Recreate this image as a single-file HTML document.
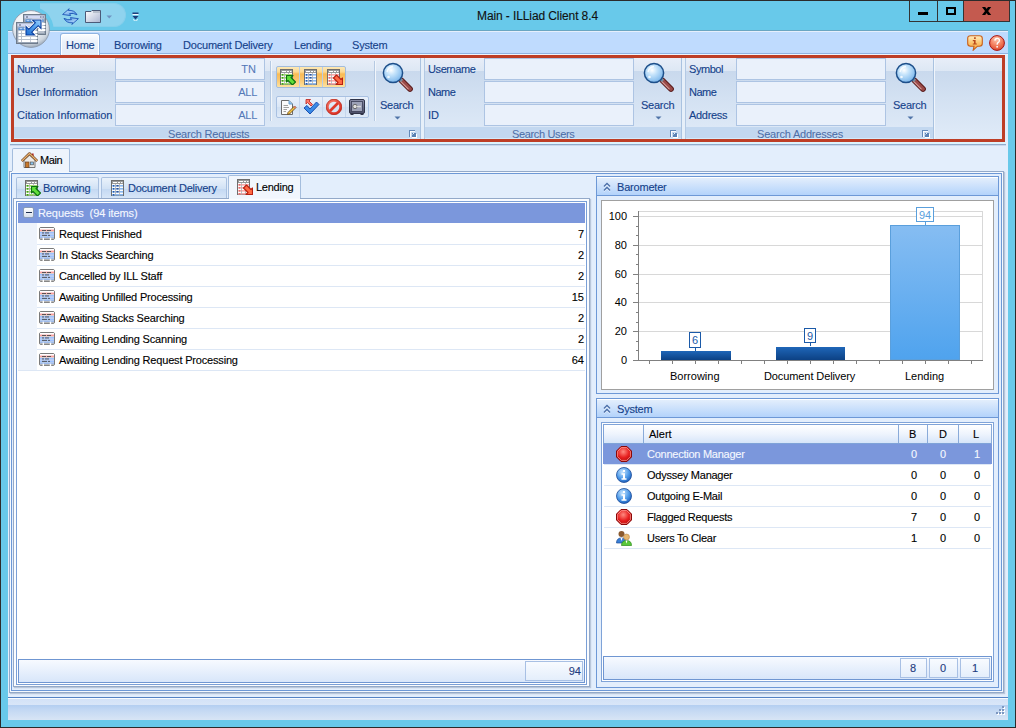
<!DOCTYPE html>
<html><head><meta charset="utf-8">
<style>
*{box-sizing:border-box;margin:0;padding:0}
html,body{width:1016px;height:728px;overflow:hidden}
body{position:relative;background:#2b2b2b;font-family:"Liberation Sans",sans-serif;font-size:11px;color:#000}
.a{position:absolute}
.t{position:absolute;white-space:nowrap;line-height:1;-webkit-text-stroke:0.12px currentColor}
</style></head><body>
<div class="a" style="left:1px;top:1px;width:1014px;height:726px;background:#68c9ea"></div>
<div class="a" style="left:8px;top:31px;width:1000px;height:689px;background:#e3eefc"></div>
<div class="a" style="left:8px;top:31px;width:1000px;height:24px;background:#bfdbfe"></div>
<div class="a" style="left:8px;top:30px;width:1000px;height:1px;background:#6aa6c2"></div>
<div class="a" style="left:8px;top:31px;width:1000px;height:1px;background:#e6effc"></div>
<div class="a" style="left:8px;top:53px;width:1000px;height:1px;background:#8fb2e2"></div>
<div class="a" style="left:8px;top:54px;width:1000px;height:1px;background:#eef4fc"></div>
<div class="t" style="left:477px;top:10px;font-size:12px;color:#111;letter-spacing:-0.1px;">Main - ILLiad Client 8.4</div>
<div class="a" style="left:909px;top:1px;width:101px;height:21px;border:1px solid #333;border-top:0;background:#68c9ea"></div>
<div class="a" style="left:937px;top:1px;width:1px;height:21px;background:#333"></div>
<div class="a" style="left:963px;top:1px;width:46px;height:20px;background:#c45a4f"></div>
<div class="a" style="left:963px;top:1px;width:1px;height:21px;background:#333"></div>
<div class="a" style="left:918px;top:12px;width:10px;height:3px;background:#000"></div>
<div class="a" style="left:946px;top:7px;width:10px;height:8px;border:2px solid #000"></div>
<svg class="a" style="left:981px;top:7px;" width="11" height="9" viewBox="0 0 11 9"><path d="M1 0 L4.2 0 L10.2 8 L7 8 Z M7 0 L10.2 0 L4.2 8 L1 8 Z" fill="#000"/></svg>
<div class="a" style="left:40px;top:3px;width:86px;height:24px;border-radius:0 12px 12px 0;background:#8fd3ee;border:1px solid #86cfeb;border-left:0"></div>
<svg class="a" style="left:8px;top:1px;" width="60" height="29" viewBox="0 0 60 29"><circle cx="23" cy="28" r="22.5" fill="#68c9ea"/></svg>
<div class="a" style="left:60px;top:33px;width:40px;height:22px;border:1px solid #8fb3e0;border-bottom:0;border-radius:3px 3px 0 0;background:linear-gradient(#fbfdff,#eaf1fa 40%,#e4ecf7);box-shadow:inset 1px 1px 0 #fff,inset -1px 0 0 #fff"></div>
<div class="t" style="left:66px;top:40px;font-size:11px;color:#15428b;letter-spacing:-0.2px;">Home</div>
<div class="t" style="left:114px;top:40px;font-size:11px;color:#15428b;letter-spacing:-0.2px;">Borrowing</div>
<div class="t" style="left:183px;top:40px;font-size:11px;color:#15428b;letter-spacing:-0.2px;">Document Delivery</div>
<div class="t" style="left:294px;top:40px;font-size:11px;color:#15428b;letter-spacing:-0.2px;">Lending</div>
<div class="t" style="left:352px;top:40px;font-size:11px;color:#15428b;letter-spacing:-0.2px;">System</div>
<div class="a" style="left:11px;top:55px;width:994px;height:87px;border:3px solid #be3e26;background:#dde7f4"></div>
<div class="a" style="left:14px;top:58px;width:988px;height:81px;background:linear-gradient(#e8eef8 0,#dde7f4 13px,#c9d9ed 13px,#d3e1f2 40px,#e0ebf8 81px)"></div>
<div class="a" style="left:14px;top:127px;width:406px;height:11px;background:#c3d8f0"></div>
<div class="a" style="left:14px;top:138px;width:406px;height:1px;background:#d4ebfb"></div>
<div class="a" style="left:425px;top:127px;width:256px;height:11px;background:#c3d8f0"></div>
<div class="a" style="left:425px;top:138px;width:256px;height:1px;background:#d4ebfb"></div>
<div class="a" style="left:686px;top:127px;width:247px;height:11px;background:#c3d8f0"></div>
<div class="a" style="left:686px;top:138px;width:247px;height:1px;background:#d4ebfb"></div>
<div class="a" style="left:420px;top:58px;width:1px;height:81px;background:#a9c2e0"></div>
<div class="a" style="left:421px;top:58px;width:3px;height:81px;background:#e6eff9"></div>
<div class="a" style="left:424px;top:58px;width:1px;height:81px;background:#b3c9e4"></div>
<div class="a" style="left:681px;top:58px;width:1px;height:81px;background:#a9c2e0"></div>
<div class="a" style="left:682px;top:58px;width:3px;height:81px;background:#e6eff9"></div>
<div class="a" style="left:685px;top:58px;width:1px;height:81px;background:#b3c9e4"></div>
<div class="a" style="left:933px;top:58px;width:1px;height:81px;background:#a9c2e0"></div>
<div class="a" style="left:934px;top:58px;width:1px;height:81px;background:#f0f5fb"></div>
<div class="t" style="left:17px;top:64px;font-size:11px;color:#15428b;letter-spacing:-0.4px;">Number</div>
<div class="a" style="left:115px;top:58px;width:150px;height:22px;background:#eaf1fb;border:1px solid #adc4e3"></div>
<div class="t" style="left:17px;top:87px;font-size:11px;color:#15428b;letter-spacing:-0.05px;">User Information</div>
<div class="a" style="left:115px;top:81px;width:150px;height:22px;background:#eaf1fb;border:1px solid #adc4e3"></div>
<div class="t" style="left:17px;top:110px;font-size:11px;color:#15428b;letter-spacing:0px;">Citation Information</div>
<div class="a" style="left:115px;top:104px;width:150px;height:22px;background:#eaf1fb;border:1px solid #adc4e3"></div>
<div class="t" style="left:156px;top:64px;width:100px;text-align:right;font-size:11px;color:#5378b8;letter-spacing:0px;-webkit-text-stroke:0.05px">TN</div>
<div class="t" style="left:157px;top:87px;width:100px;text-align:right;font-size:11px;color:#5378b8;letter-spacing:-0.3px;-webkit-text-stroke:0.05px">ALL</div>
<div class="t" style="left:157px;top:110px;width:100px;text-align:right;font-size:11px;color:#5378b8;letter-spacing:-0.3px;-webkit-text-stroke:0.05px">ALL</div>
<div class="a" style="left:270px;top:61px;width:1px;height:60px;background:#b5c9e2"></div>
<div class="a" style="left:271px;top:61px;width:1px;height:60px;background:#f2f6fb"></div>
<div class="a" style="left:374px;top:61px;width:1px;height:60px;background:#b5c9e2"></div>
<div class="a" style="left:375px;top:61px;width:1px;height:60px;background:#f2f6fb"></div>
<div class="t" style="left:168px;top:129px;font-size:11px;color:#4e6fa8;letter-spacing:-0.2px;-webkit-text-stroke:0.05px">Search Requests</div>
<div class="t" style="left:512px;top:129px;font-size:11px;color:#4e6fa8;letter-spacing:-0.35px;-webkit-text-stroke:0.05px">Search Users</div>
<div class="t" style="left:757px;top:129px;font-size:11px;color:#4e6fa8;letter-spacing:-0.2px;-webkit-text-stroke:0.05px">Search Addresses</div>
<div class="t" style="left:428px;top:64px;font-size:11px;color:#15428b;letter-spacing:-0.4px;">Username</div>
<div class="a" style="left:484px;top:58px;width:150px;height:22px;background:#eaf1fb;border:1px solid #adc4e3"></div>
<div class="t" style="left:428px;top:87px;font-size:11px;color:#15428b;letter-spacing:-0.5px;">Name</div>
<div class="a" style="left:484px;top:81px;width:150px;height:22px;background:#eaf1fb;border:1px solid #adc4e3"></div>
<div class="t" style="left:428px;top:110px;font-size:11px;color:#15428b;letter-spacing:0px;">ID</div>
<div class="a" style="left:484px;top:104px;width:150px;height:22px;background:#eaf1fb;border:1px solid #adc4e3"></div>
<div class="t" style="left:689px;top:64px;font-size:11px;color:#15428b;letter-spacing:-0.45px;">Symbol</div>
<div class="a" style="left:736px;top:58px;width:150px;height:22px;background:#eaf1fb;border:1px solid #adc4e3"></div>
<div class="t" style="left:689px;top:87px;font-size:11px;color:#15428b;letter-spacing:-0.5px;">Name</div>
<div class="a" style="left:736px;top:81px;width:150px;height:22px;background:#eaf1fb;border:1px solid #adc4e3"></div>
<div class="t" style="left:689px;top:110px;font-size:11px;color:#15428b;letter-spacing:-0.3px;">Address</div>
<div class="a" style="left:736px;top:104px;width:150px;height:22px;background:#eaf1fb;border:1px solid #adc4e3"></div>
<div class="t" style="left:380px;top:100px;font-size:11px;color:#15428b;letter-spacing:-0.25px;">Search</div>
<div class="t" style="left:641px;top:100px;font-size:11px;color:#15428b;letter-spacing:-0.25px;">Search</div>
<div class="t" style="left:893px;top:100px;font-size:11px;color:#15428b;letter-spacing:-0.25px;">Search</div>
<div class="a" style="left:10px;top:142px;width:996px;height:2px;background:#dcf3fd"></div>
<div class="a" style="left:10px;top:144px;width:996px;height:1px;background:#93abca"></div>
<div class="a" style="left:10px;top:145px;width:996px;height:1px;background:#c9d9ee"></div>
<div class="a" style="left:12px;top:148px;width:58px;height:24px;border:1px solid #a4bddd;border-bottom:0;border-radius:2px 2px 0 0;background:#eef4fc"></div>
<div class="t" style="left:40px;top:155px;font-size:11px;color:#000;letter-spacing:-0.4px;">Main</div>
<div class="a" style="left:9px;top:171px;width:995px;height:522px;border:1px solid #93a9c9;background:#f5f9fe;box-shadow:1px 1px 1px rgba(90,110,140,.3)"></div>
<div class="a" style="left:12px;top:171px;width:57px;height:1px;background:#eef4fc"></div>
<div class="a" style="left:11px;top:173px;width:991px;height:518px;border:1px solid #6d98d6;background:#e3eefc"></div>
<div class="a" style="left:16px;top:177px;width:83px;height:22px;border:1px solid #a9c0df;border-bottom:0;border-radius:2px 2px 0 0;background:linear-gradient(#eaf2fb,#d2e2f5 50%,#c3d8f2 51%,#d9e7f8)"></div>
<div class="a" style="left:101px;top:177px;width:126px;height:22px;border:1px solid #a9c0df;border-bottom:0;border-radius:2px 2px 0 0;background:linear-gradient(#eaf2fb,#d2e2f5 50%,#c3d8f2 51%,#d9e7f8)"></div>
<div class="a" style="left:228px;top:175px;width:73px;height:25px;border:1px solid #a4bddd;border-bottom:0;border-radius:2px 2px 0 0;background:#f1f6fd"></div>
<div class="t" style="left:43px;top:183px;font-size:11px;color:#15428b;letter-spacing:-0.25px;">Borrowing</div>
<div class="t" style="left:128px;top:183px;font-size:11px;color:#15428b;letter-spacing:-0.25px;">Document Delivery</div>
<div class="t" style="left:256px;top:182px;font-size:11px;color:#000;letter-spacing:-0.25px;">Lending</div>
<div class="a" style="left:13px;top:198px;width:577px;height:489px;border:1px solid #93a9c9;background:#fafcff;box-shadow:1px 1px 1px rgba(90,110,140,.3)"></div>
<div class="a" style="left:229px;top:198px;width:71px;height:1px;background:#f4f8fe"></div>
<div class="a" style="left:16px;top:201px;width:571px;height:484px;border:1px solid #7a9fd6;background:#fff"></div>
<div class="a" style="left:18px;top:203px;width:567px;height:20px;background:#7b97dc"></div>
<div class="a" style="left:23px;top:207px;width:11px;height:11px;border:1px solid #8a9cb8;border-radius:2px;background:linear-gradient(#ffffff,#d8e0ec)"></div>
<div class="a" style="left:26px;top:212px;width:6px;height:1px;background:#1d2d50"></div>
<div class="t" style="left:38px;top:208px;font-size:11px;color:#f4f7ff;letter-spacing:-0.1px;">Requests&nbsp; (94 items)</div>
<div class="a" style="left:18px;top:223px;width:19px;height:147px;background:#eef3fb"></div>
<div class="a" style="left:37px;top:244px;width:548px;height:1px;background:#dde7f5"></div>
<div class="t" style="left:59px;top:229px;font-size:11px;color:#000;letter-spacing:-0.18px;">Request Finished</div>
<div class="t" style="left:484px;top:229px;width:100px;text-align:right;font-size:11px;color:#000;letter-spacing:0px;">7</div>
<div class="a" style="left:37px;top:265px;width:548px;height:1px;background:#dde7f5"></div>
<div class="t" style="left:59px;top:250px;font-size:11px;color:#000;letter-spacing:-0.18px;">In Stacks Searching</div>
<div class="t" style="left:484px;top:250px;width:100px;text-align:right;font-size:11px;color:#000;letter-spacing:0px;">2</div>
<div class="a" style="left:37px;top:286px;width:548px;height:1px;background:#dde7f5"></div>
<div class="t" style="left:59px;top:271px;font-size:11px;color:#000;letter-spacing:-0.18px;">Cancelled by ILL Staff</div>
<div class="t" style="left:484px;top:271px;width:100px;text-align:right;font-size:11px;color:#000;letter-spacing:0px;">2</div>
<div class="a" style="left:37px;top:307px;width:548px;height:1px;background:#dde7f5"></div>
<div class="t" style="left:59px;top:292px;font-size:11px;color:#000;letter-spacing:-0.18px;">Awaiting Unfilled Processing</div>
<div class="t" style="left:484px;top:292px;width:100px;text-align:right;font-size:11px;color:#000;letter-spacing:0px;">15</div>
<div class="a" style="left:37px;top:328px;width:548px;height:1px;background:#dde7f5"></div>
<div class="t" style="left:59px;top:313px;font-size:11px;color:#000;letter-spacing:-0.18px;">Awaiting Stacks Searching</div>
<div class="t" style="left:484px;top:313px;width:100px;text-align:right;font-size:11px;color:#000;letter-spacing:0px;">2</div>
<div class="a" style="left:37px;top:349px;width:548px;height:1px;background:#dde7f5"></div>
<div class="t" style="left:59px;top:334px;font-size:11px;color:#000;letter-spacing:-0.18px;">Awaiting Lending Scanning</div>
<div class="t" style="left:484px;top:334px;width:100px;text-align:right;font-size:11px;color:#000;letter-spacing:0px;">2</div>
<div class="a" style="left:37px;top:370px;width:548px;height:1px;background:#dde7f5"></div>
<div class="t" style="left:59px;top:355px;font-size:11px;color:#000;letter-spacing:-0.18px;">Awaiting Lending Request Processing</div>
<div class="t" style="left:484px;top:355px;width:100px;text-align:right;font-size:11px;color:#000;letter-spacing:0px;">64</div>
<div class="a" style="left:18px;top:370px;width:19px;height:1px;background:#dde7f5"></div>
<div class="a" style="left:18px;top:659px;width:567px;height:24px;border:1px solid #6f96d2;background:linear-gradient(#f7faff,#d8e6fa)"></div>
<div class="a" style="left:525px;top:661px;width:58px;height:20px;border:1px solid #a8c0e4;background:linear-gradient(#f8fbff,#e4eefb)"></div>
<div class="t" style="left:481px;top:666px;width:100px;text-align:right;font-size:11px;color:#1f3c80;letter-spacing:0px;">94</div>
<div class="a" style="left:596px;top:176px;width:403px;height:218px;border:1px solid #6d98d6;background:#e3eefc"></div>
<div class="a" style="left:597px;top:177px;width:401px;height:19px;border-bottom:1px solid #6d98d6;background:linear-gradient(#fff 0,#fff 1px,#e3eefc 1px,#b3d3fb 100%)"></div>
<div class="t" style="left:617px;top:182px;font-size:11px;color:#15428b;letter-spacing:-0.2px;">Barometer</div>
<div class="a" style="left:601px;top:200px;width:393px;height:190px;border:1px solid #a0a0a0;background:#fff"></div>
<svg class="a" style="left:0;top:0" width="1016" height="728"><rect x="638.5" y="211.5" width="344" height="149" fill="none" stroke="#d8d8d8"/><line x1="639" y1="331.5" x2="982" y2="331.5" stroke="#d8d8d8"/><line x1="639" y1="302.5" x2="982" y2="302.5" stroke="#d8d8d8"/><line x1="639" y1="274.5" x2="982" y2="274.5" stroke="#d8d8d8"/><line x1="639" y1="245.5" x2="982" y2="245.5" stroke="#d8d8d8"/><line x1="639" y1="216.5" x2="982" y2="216.5" stroke="#d8d8d8"/><line x1="633" y1="360.5" x2="639" y2="360.5" stroke="#808080"/><line x1="636" y1="350.5" x2="639" y2="350.5" stroke="#808080"/><line x1="636" y1="341.5" x2="639" y2="341.5" stroke="#808080"/><line x1="633" y1="331.5" x2="639" y2="331.5" stroke="#808080"/><line x1="636" y1="322.5" x2="639" y2="322.5" stroke="#808080"/><line x1="636" y1="312.5" x2="639" y2="312.5" stroke="#808080"/><line x1="633" y1="302.5" x2="639" y2="302.5" stroke="#808080"/><line x1="636" y1="293.5" x2="639" y2="293.5" stroke="#808080"/><line x1="636" y1="283.5" x2="639" y2="283.5" stroke="#808080"/><line x1="633" y1="274.5" x2="639" y2="274.5" stroke="#808080"/><line x1="636" y1="264.5" x2="639" y2="264.5" stroke="#808080"/><line x1="636" y1="254.5" x2="639" y2="254.5" stroke="#808080"/><line x1="633" y1="245.5" x2="639" y2="245.5" stroke="#808080"/><line x1="636" y1="235.5" x2="639" y2="235.5" stroke="#808080"/><line x1="636" y1="226.5" x2="639" y2="226.5" stroke="#808080"/><line x1="633" y1="216.5" x2="639" y2="216.5" stroke="#808080"/><line x1="638.5" y1="211" x2="638.5" y2="361" stroke="#808080"/><line x1="638" y1="360.5" x2="983" y2="360.5" stroke="#808080"/><line x1="649.5" y1="361" x2="649.5" y2="364" stroke="#808080"/><line x1="672.5" y1="361" x2="672.5" y2="364" stroke="#808080"/><line x1="695.5" y1="361" x2="695.5" y2="364" stroke="#808080"/><line x1="718.5" y1="361" x2="718.5" y2="364" stroke="#808080"/><line x1="741.5" y1="361" x2="741.5" y2="364" stroke="#808080"/><line x1="764.5" y1="361" x2="764.5" y2="364" stroke="#808080"/><line x1="787.5" y1="361" x2="787.5" y2="364" stroke="#808080"/><line x1="810.5" y1="361" x2="810.5" y2="364" stroke="#808080"/><line x1="833.5" y1="361" x2="833.5" y2="364" stroke="#808080"/><line x1="856.5" y1="361" x2="856.5" y2="364" stroke="#808080"/><line x1="879.5" y1="361" x2="879.5" y2="364" stroke="#808080"/><line x1="902.5" y1="361" x2="902.5" y2="364" stroke="#808080"/><line x1="925.5" y1="361" x2="925.5" y2="364" stroke="#808080"/><line x1="948.5" y1="361" x2="948.5" y2="364" stroke="#808080"/><line x1="971.5" y1="361" x2="971.5" y2="364" stroke="#808080"/><defs><linearGradient id="gd" x1="0" y1="0" x2="0" y2="1"><stop offset="0" stop-color="#1f66b8"/><stop offset="1" stop-color="#0c4184"/></linearGradient><linearGradient id="gl" x1="0" y1="0" x2="0" y2="1"><stop offset="0" stop-color="#86bdf2"/><stop offset="1" stop-color="#4fa3ee"/></linearGradient></defs><rect x="661" y="351" width="70" height="9" fill="url(#gd)"/><rect x="776" y="347" width="69" height="13" fill="url(#gd)"/><rect x="890.5" y="225.5" width="69" height="134" fill="url(#gl)" stroke="#5a9fdc"/><rect x="689.5" y="332.5" width="11" height="15" fill="#fff" stroke="#1b5aa8"/><line x1="695.5" y1="348" x2="695.5" y2="351" stroke="#1b5aa8"/><rect x="804.5" y="328.5" width="11" height="14" fill="#fff" stroke="#1b5aa8"/><line x1="810.5" y1="343" x2="810.5" y2="346" stroke="#1b5aa8"/><rect x="916.5" y="207.5" width="17" height="14" fill="#fff" stroke="#5a9fdc"/><line x1="925.5" y1="222" x2="925.5" y2="225" stroke="#5a9fdc"/></svg>
<div class="t" style="left:527px;top:211px;width:100px;text-align:right;font-size:11px;color:#000;letter-spacing:0px;-webkit-text-stroke:0">100</div>
<div class="t" style="left:527px;top:240px;width:100px;text-align:right;font-size:11px;color:#000;letter-spacing:0px;-webkit-text-stroke:0">80</div>
<div class="t" style="left:527px;top:269px;width:100px;text-align:right;font-size:11px;color:#000;letter-spacing:0px;-webkit-text-stroke:0">60</div>
<div class="t" style="left:527px;top:297px;width:100px;text-align:right;font-size:11px;color:#000;letter-spacing:0px;-webkit-text-stroke:0">40</div>
<div class="t" style="left:527px;top:326px;width:100px;text-align:right;font-size:11px;color:#000;letter-spacing:0px;-webkit-text-stroke:0">20</div>
<div class="t" style="left:527px;top:355px;width:100px;text-align:right;font-size:11px;color:#000;letter-spacing:0px;-webkit-text-stroke:0">0</div>
<div class="t" style="left:595px;top:335px;width:200px;text-align:center;font-size:11px;color:#1b5aa8;letter-spacing:0px;-webkit-text-stroke:0">6</div>
<div class="t" style="left:710px;top:331px;width:200px;text-align:center;font-size:11px;color:#1b5aa8;letter-spacing:0px;-webkit-text-stroke:0">9</div>
<div class="t" style="left:825px;top:210px;width:200px;text-align:center;font-size:11px;color:#5a9fdc;letter-spacing:0px;-webkit-text-stroke:0">94</div>
<div class="t" style="left:670px;top:371px;font-size:11px;color:#000;letter-spacing:0px;-webkit-text-stroke:0">Borrowing</div>
<div class="t" style="left:764px;top:371px;font-size:11px;color:#000;letter-spacing:-0.1px;-webkit-text-stroke:0">Document Delivery</div>
<div class="t" style="left:905px;top:371px;font-size:11px;color:#000;letter-spacing:0px;-webkit-text-stroke:0">Lending</div>
<div class="a" style="left:596px;top:398px;width:403px;height:290px;border:1px solid #6d98d6;background:#e3eefc"></div>
<div class="a" style="left:597px;top:399px;width:401px;height:19px;border-bottom:1px solid #6d98d6;background:linear-gradient(#fff 0,#fff 1px,#e3eefc 1px,#b3d3fb 100%)"></div>
<div class="t" style="left:617px;top:404px;font-size:11px;color:#15428b;letter-spacing:-0.2px;">System</div>
<div class="a" style="left:601px;top:422px;width:393px;height:260px;border:1px solid #7fa3d8;background:#fff"></div>
<div class="a" style="left:603px;top:424px;width:389px;height:20px;border:1px solid #7fa3d8;border-right-color:#8aabd9;background:linear-gradient(#ffffff,#eef4fd 50%,#d6e5f9)"></div>
<div class="a" style="left:643px;top:425px;width:1px;height:18px;background:#8aabd9"></div>
<div class="a" style="left:898px;top:425px;width:1px;height:18px;background:#8aabd9"></div>
<div class="a" style="left:927px;top:425px;width:1px;height:18px;background:#8aabd9"></div>
<div class="a" style="left:958px;top:425px;width:1px;height:18px;background:#8aabd9"></div>
<div class="t" style="left:649px;top:429px;font-size:11px;color:#000;letter-spacing:0px;">Alert</div>
<div class="t" style="left:909px;top:429px;font-size:11px;color:#000;letter-spacing:0px;">B</div>
<div class="t" style="left:939px;top:429px;font-size:11px;color:#000;letter-spacing:0px;">D</div>
<div class="t" style="left:973px;top:429px;font-size:11px;color:#000;letter-spacing:0px;">L</div>
<div class="a" style="left:603px;top:444px;width:389px;height:20px;background:#7b97dc"></div>
<div class="a" style="left:604px;top:464px;width:387px;height:1px;background:#dde7f5"></div>
<div class="t" style="left:647px;top:449px;font-size:11px;color:#f4f7ff;letter-spacing:-0.25px;">Connection Manager</div>
<div class="t" style="left:911px;top:449px;font-size:11px;color:#f4f7ff;letter-spacing:0px;">0</div>
<div class="t" style="left:940px;top:449px;font-size:11px;color:#f4f7ff;letter-spacing:0px;">0</div>
<div class="t" style="left:974px;top:449px;font-size:11px;color:#f4f7ff;letter-spacing:0px;">1</div>
<div class="a" style="left:604px;top:485px;width:387px;height:1px;background:#dde7f5"></div>
<div class="t" style="left:647px;top:470px;font-size:11px;color:#000;letter-spacing:-0.25px;">Odyssey Manager</div>
<div class="t" style="left:911px;top:470px;font-size:11px;color:#000;letter-spacing:0px;">0</div>
<div class="t" style="left:940px;top:470px;font-size:11px;color:#000;letter-spacing:0px;">0</div>
<div class="t" style="left:974px;top:470px;font-size:11px;color:#000;letter-spacing:0px;">0</div>
<div class="a" style="left:604px;top:506px;width:387px;height:1px;background:#dde7f5"></div>
<div class="t" style="left:647px;top:491px;font-size:11px;color:#000;letter-spacing:-0.25px;">Outgoing E-Mail</div>
<div class="t" style="left:911px;top:491px;font-size:11px;color:#000;letter-spacing:0px;">0</div>
<div class="t" style="left:940px;top:491px;font-size:11px;color:#000;letter-spacing:0px;">0</div>
<div class="t" style="left:974px;top:491px;font-size:11px;color:#000;letter-spacing:0px;">0</div>
<div class="a" style="left:604px;top:527px;width:387px;height:1px;background:#dde7f5"></div>
<div class="t" style="left:647px;top:512px;font-size:11px;color:#000;letter-spacing:-0.25px;">Flagged Requests</div>
<div class="t" style="left:911px;top:512px;font-size:11px;color:#000;letter-spacing:0px;">7</div>
<div class="t" style="left:940px;top:512px;font-size:11px;color:#000;letter-spacing:0px;">0</div>
<div class="t" style="left:974px;top:512px;font-size:11px;color:#000;letter-spacing:0px;">0</div>
<div class="a" style="left:604px;top:548px;width:387px;height:1px;background:#dde7f5"></div>
<div class="t" style="left:647px;top:533px;font-size:11px;color:#000;letter-spacing:-0.25px;">Users To Clear</div>
<div class="t" style="left:911px;top:533px;font-size:11px;color:#000;letter-spacing:0px;">1</div>
<div class="t" style="left:940px;top:533px;font-size:11px;color:#000;letter-spacing:0px;">0</div>
<div class="t" style="left:974px;top:533px;font-size:11px;color:#000;letter-spacing:0px;">0</div>
<div class="a" style="left:603px;top:656px;width:389px;height:24px;border:1px solid #6f96d2;background:linear-gradient(#f7faff,#d8e6fa)"></div>
<div class="a" style="left:900px;top:658px;width:27px;height:20px;border:1px solid #a8c0e4;background:linear-gradient(#f8fbff,#e4eefb)"></div>
<div class="t" style="left:813px;top:663px;width:200px;text-align:center;font-size:11px;color:#1f3c80;letter-spacing:0px;">8</div>
<div class="a" style="left:929px;top:658px;width:29px;height:20px;border:1px solid #a8c0e4;background:linear-gradient(#f8fbff,#e4eefb)"></div>
<div class="t" style="left:843px;top:663px;width:200px;text-align:center;font-size:11px;color:#1f3c80;letter-spacing:0px;">0</div>
<div class="a" style="left:960px;top:658px;width:30px;height:20px;border:1px solid #a8c0e4;background:linear-gradient(#f8fbff,#e4eefb)"></div>
<div class="t" style="left:875px;top:663px;width:200px;text-align:center;font-size:11px;color:#1f3c80;letter-spacing:0px;">1</div>
<div class="a" style="left:8px;top:697px;width:1000px;height:23px;border-top:1px solid #5583c4;background:linear-gradient(#fafcff 0,#fafcff 1px,#d3e2f7 1px,#d9e6f8 7px,#b3cef1 7px,#c3d8f3 12px,#d8e5f5 22px)"></div>
<svg class="a" style="left:10px;top:8px;" width="44" height="44" viewBox="0 0 44 44"><defs>
<radialGradient id="abg" cx="0.45" cy="0.3" r="0.7"><stop offset="0" stop-color="#ffffff"/><stop offset="0.55" stop-color="#eef1f5"/><stop offset="0.85" stop-color="#cdd5de"/><stop offset="1" stop-color="#9eabb9"/></radialGradient>
<linearGradient id="arr" x1="0" y1="1" x2="1" y2="0"><stop offset="0" stop-color="#1b6ad0"/><stop offset="0.6" stop-color="#5aa6f0"/><stop offset="1" stop-color="#9fd2ff"/></linearGradient>
</defs>
<circle cx="21" cy="21" r="18.4" fill="url(#abg)" stroke="#8d9aab" stroke-width="0.9"/>
<rect x="13.5" y="6.5" width="22" height="20" fill="#9aa6b6" stroke="#6f7c8c"/><rect x="14.5" y="7.5" width="20" height="3" fill="#d4daf4"/><rect x="16" y="8.5" width="2" height="1" fill="#505a70"/><rect x="30" y="8.5" width="1.5" height="1" fill="#505a70"/><rect x="32.5" y="8.5" width="1.5" height="1" fill="#505a70"/><rect x="15" y="11" width="19" height="14" fill="#b8c0cc"/><rect x="15.5" y="11.5" width="18" height="2.5" fill="#3b7fd4"/><rect x="16.5" y="12.3" width="3" height="0.9" fill="#e8f2ff"/><rect x="20.5" y="12.3" width="2" height="0.9" fill="#e8f2ff"/><rect x="15.5" y="15" width="2.5" height="2" fill="#fff"/><rect x="19" y="15" width="8.5" height="2" fill="#fff"/><rect x="28.3" y="15" width="7.1" height="2" fill="#fff"/><rect x="15.5" y="18" width="2.5" height="2" fill="#fff"/><rect x="19" y="18" width="8.5" height="2" fill="#fff"/><rect x="28.3" y="18" width="7.1" height="2" fill="#fff"/><rect x="15.5" y="21" width="2.5" height="2" fill="#fff"/><rect x="19" y="21" width="8.5" height="2" fill="#fff"/><rect x="28.3" y="21" width="7.1" height="2" fill="#fff"/><rect x="6.5" y="14.5" width="21" height="21" fill="#9aa6b6" stroke="#6f7c8c"/><rect x="7.5" y="15.5" width="19" height="3" fill="#d4daf4"/><rect x="9" y="16.5" width="2" height="1" fill="#505a70"/><rect x="22" y="16.5" width="1.5" height="1" fill="#505a70"/><rect x="24.5" y="16.5" width="1.5" height="1" fill="#505a70"/><rect x="8" y="19" width="18" height="15" fill="#b8c0cc"/><rect x="8.5" y="19.5" width="17" height="2.5" fill="#3b7fd4"/><rect x="9.5" y="20.3" width="3" height="0.9" fill="#e8f2ff"/><rect x="13.5" y="20.3" width="2" height="0.9" fill="#e8f2ff"/><rect x="8.5" y="23" width="2.5" height="2" fill="#fff"/><rect x="12" y="23" width="8.0" height="2" fill="#fff"/><rect x="20.8" y="23" width="6.7" height="2" fill="#fff"/><rect x="8.5" y="26" width="2.5" height="2" fill="#fff"/><rect x="12" y="26" width="8.0" height="2" fill="#fff"/><rect x="20.8" y="26" width="6.7" height="2" fill="#fff"/><rect x="8.5" y="29" width="2.5" height="2" fill="#fff"/><rect x="12" y="29" width="8.0" height="2" fill="#fff"/><rect x="20.8" y="29" width="6.7" height="2" fill="#fff"/><rect x="8.5" y="32" width="2.5" height="2" fill="#fff"/><rect x="12" y="32" width="8.0" height="2" fill="#fff"/><rect x="20.8" y="32" width="6.7" height="2" fill="#fff"/><path d="M31 12 L31 20.5 L28.2 17.7 L21.7 24.2 L24.5 27 L16 27 L16 18.5 L18.8 21.3 L25.3 14.8 L22.5 12 Z" fill="none" stroke="#fff" stroke-width="2.6" stroke-linejoin="round"/><path d="M31 12 L31 20.5 L28.2 17.7 L21.7 24.2 L24.5 27 L16 27 L16 18.5 L18.8 21.3 L25.3 14.8 L22.5 12 Z" fill="url(#arr)" stroke="#0a3c9c" stroke-width="1.1" stroke-linejoin="miter"/></svg>
<svg class="a" style="left:61px;top:5px;" width="20" height="20" viewBox="0 0 20 20"><defs><linearGradient id="rfg" x1="0" y1="0" x2="1" y2="1"><stop offset="0" stop-color="#d4ecff"/><stop offset="1" stop-color="#4c94e4"/></linearGradient></defs><g transform="translate(0,3.4) scale(1,0.78)"><path d="M16 8.2 Q13.5 1.8 7.2 2.6 L8.2 0.4 L1.6 7.8 L9.6 9.2 L8.6 6.6 Q12.2 5.6 16 8.2 Z" fill="url(#rfg)" stroke="#1a52b4" stroke-width="1" stroke-linejoin="round"/><g transform="rotate(180 9.5 10.5)"><path d="M16 8.2 Q13.5 1.8 7.2 2.6 L8.2 0.4 L1.6 7.8 L9.6 9.2 L8.6 6.6 Q12.2 5.6 16 8.2 Z" fill="url(#rfg)" stroke="#1a52b4" stroke-width="1" stroke-linejoin="round"/></g></g></svg>
<svg class="a" style="left:85px;top:10px;" width="17" height="14" viewBox="0 0 17 14"><defs><linearGradient id="fd" x1="0" y1="0" x2="1" y2="1"><stop offset="0" stop-color="#ffffff"/><stop offset="1" stop-color="#aab4d0"/></linearGradient></defs>
<path d="M0.5 1.5 L6 1.5 L7 0.5 L15.5 0.5 L15.5 12.5 L0.5 12.5 Z" fill="url(#fd)" stroke="#4b5a78"/>
<rect x="8" y="1" width="7" height="2" fill="#b7bfcc"/></svg>
<svg class="a" style="left:106px;top:15px;" width="7" height="5" viewBox="0 0 7 5"><path d="M0.5 0.5 L6 0.5 L3.25 3.5 Z" fill="#6f93c0"/></svg>
<svg class="a" style="left:132px;top:12px;" width="7" height="9" viewBox="0 0 7 9"><rect x="0.5" y="0.5" width="6" height="1.6" fill="#1e3f7a"/><rect x="0.5" y="2.1" width="6" height="1" fill="#fff"/><path d="M0.5 4 L6.5 4 L3.5 7.5 Z" fill="#1e3f7a"/><path d="M1 7.5 L3.5 8.8 L6 7.5" stroke="#fff" stroke-width="0.8" fill="none"/></svg>
<svg class="a" style="left:967px;top:35px;" width="16" height="16" viewBox="0 0 16 16"><defs><linearGradient id="ib" x1="0" y1="0" x2="0" y2="1"><stop offset="0" stop-color="#ffeec0"/><stop offset="0.5" stop-color="#fcc46e"/><stop offset="1" stop-color="#f6a23c"/></linearGradient></defs>
<path d="M3.5 0.8 L12.5 0.8 Q15.3 0.8 15.3 3.5 L15.3 8.5 Q15.3 11.2 12.5 11.2 L10.5 11.2 L6.2 15.2 L7 11.2 L3.5 11.2 Q0.7 11.2 0.7 8.5 L0.7 3.5 Q0.7 0.8 3.5 0.8 Z" fill="url(#ib)" stroke="#c8601c" stroke-width="1.1"/>
<rect x="7" y="2.3" width="1.8" height="1.6" fill="#b8481c"/><path d="M5.8 5 L8.6 5 L8.6 8.4 L9.8 8.4 L9.8 9.6 L5.8 9.6 L5.8 8.4 L7 8.4 L7 6.2 L5.8 6.2 Z" fill="#b8481c"/></svg>
<svg class="a" style="left:989px;top:35px;" width="16" height="16" viewBox="0 0 16 16"><defs><radialGradient id="hb" cx="0.45" cy="0.25" r="0.8"><stop offset="0" stop-color="#ffc8b0"/><stop offset="0.55" stop-color="#f27a5a"/><stop offset="1" stop-color="#d8442a"/></radialGradient></defs>
<circle cx="8" cy="8" r="7.4" fill="url(#hb)" stroke="#a81414" stroke-width="1"/>
<path d="M5.9 5.6 Q6 3.4 8.2 3.4 Q10.4 3.4 10.4 5.4 Q10.4 6.8 9 7.6 Q8.1 8.2 8.1 9.8" stroke="#fff" stroke-width="1.3" fill="none"/><rect x="7.4" y="11" width="1.5" height="1.6" fill="#fff"/></svg>
<div class="a" style="left:276px;top:66px;width:70px;height:22px;border:1px solid #a3bcdc;border-radius:2px;background:linear-gradient(#fde9b6 0,#fcd892 5px,#f9bb55 7px,#fac46a 12px,#fdde98 19px,#fff0c0 22px)"></div>
<div class="a" style="left:299px;top:67px;width:1px;height:20px;background:#b9cde6"></div>
<div class="a" style="left:322px;top:67px;width:1px;height:20px;background:#b9cde6"></div>
<svg class="a" style="left:280px;top:69px;" width="16" height="16" viewBox="0 0 16 16"><rect x="0.5" y="0.5" width="12" height="15" fill="#fdfdfd" stroke="#6e6e6e"/><rect x="1" y="1" width="11" height="3" fill="#9a9a9a"/><rect x="2" y="2" width="4" height="1" fill="#fff"/><rect x="7" y="2" width="2" height="1" fill="#fff"/><rect x="10" y="2" width="1.5" height="1" fill="#fff"/><rect x="1" y="5" width="11" height="1.6" fill="#9ede6a"/><rect x="2" y="5" width="1.2" height="1.6" fill="#3a9a20"/><rect x="1" y="8" width="11" height="1.6" fill="#9ede6a"/><rect x="2" y="8" width="1.2" height="1.6" fill="#3a9a20"/><rect x="1" y="11" width="11" height="1.6" fill="#9ede6a"/><rect x="2" y="11" width="1.2" height="1.6" fill="#3a9a20"/><rect x="1" y="14" width="11" height="1.6" fill="#9ede6a"/><rect x="2" y="14" width="1.2" height="1.6" fill="#3a9a20"/><line x1="4.5" y1="4" x2="4.5" y2="15.5" stroke="#b0b0b0" stroke-width="0.8"/><line x1="8.5" y1="4" x2="8.5" y2="15.5" stroke="#b0b0b0" stroke-width="0.8"/><path d="M6.5 6.5 L13 6.5 L11 8.5 L15.5 13 L12.5 16 L8 11.5 L6.5 13 Z" fill="#62de3a" stroke="#0a7010" stroke-width="1.1" stroke-linejoin="round"/></svg>
<svg class="a" style="left:304px;top:69px;" width="16" height="16" viewBox="0 0 16 16"><rect x="0.5" y="0.5" width="12" height="15" fill="#fdfdfd" stroke="#6e6e6e"/><rect x="1" y="1" width="11" height="3" fill="#9a9a9a"/><rect x="2" y="2" width="4" height="1" fill="#fff"/><rect x="7" y="2" width="2" height="1" fill="#fff"/><rect x="10" y="2" width="1.5" height="1" fill="#fff"/><rect x="1" y="5" width="11" height="1.6" fill="#8ab8f0"/><rect x="2" y="5" width="1.2" height="1.6" fill="#2a5aa8"/><rect x="1" y="8" width="11" height="1.6" fill="#8ab8f0"/><rect x="2" y="8" width="1.2" height="1.6" fill="#2a5aa8"/><rect x="1" y="11" width="11" height="1.6" fill="#8ab8f0"/><rect x="2" y="11" width="1.2" height="1.6" fill="#2a5aa8"/><rect x="1" y="14" width="11" height="1.6" fill="#8ab8f0"/><rect x="2" y="14" width="1.2" height="1.6" fill="#2a5aa8"/><line x1="4.5" y1="4" x2="4.5" y2="15.5" stroke="#b0b0b0" stroke-width="0.8"/><line x1="8.5" y1="4" x2="8.5" y2="15.5" stroke="#b0b0b0" stroke-width="0.8"/><rect x="5.5" y="5.2" width="2" height="1.2" fill="#1a3a80"/><rect x="5.5" y="8.2" width="2" height="1.2" fill="#1a3a80"/><rect x="5.5" y="11.2" width="2" height="1.2" fill="#1a3a80"/></svg>
<svg class="a" style="left:327px;top:69px;" width="16" height="16" viewBox="0 0 16 16"><rect x="0.5" y="0.5" width="12" height="15" fill="#fdfdfd" stroke="#6e6e6e"/><rect x="1" y="1" width="11" height="3" fill="#9a9a9a"/><rect x="2" y="2" width="4" height="1" fill="#fff"/><rect x="7" y="2" width="2" height="1" fill="#fff"/><rect x="10" y="2" width="1.5" height="1" fill="#fff"/><rect x="1" y="5" width="11" height="1.6" fill="#ffa8a8"/><rect x="2" y="5" width="1.2" height="1.6" fill="#e07070"/><rect x="1" y="8" width="11" height="1.6" fill="#ffa8a8"/><rect x="2" y="8" width="1.2" height="1.6" fill="#e07070"/><rect x="1" y="11" width="11" height="1.6" fill="#ffa8a8"/><rect x="2" y="11" width="1.2" height="1.6" fill="#e07070"/><rect x="1" y="14" width="11" height="1.6" fill="#ffa8a8"/><rect x="2" y="14" width="1.2" height="1.6" fill="#e07070"/><line x1="4.5" y1="4" x2="4.5" y2="15.5" stroke="#b0b0b0" stroke-width="0.8"/><line x1="8.5" y1="4" x2="8.5" y2="15.5" stroke="#b0b0b0" stroke-width="0.8"/><path d="M15.5 15.5 L9 15.5 L11 13.5 L6.5 9 L9.5 6 L14 10.5 L15.5 9 Z" fill="#ff6a44" stroke="#b82010" stroke-width="1.1" stroke-linejoin="round"/></svg>
<div class="a" style="left:276px;top:96px;width:93px;height:22px;border:1px solid #a9c1e2;border-radius:2px;background:linear-gradient(#eaf1fb,#dbe7f6 50%,#d0e0f3 51%,#dfeaf8)"></div>
<div class="a" style="left:299px;top:97px;width:1px;height:20px;background:#c5d6ec"></div>
<div class="a" style="left:322px;top:97px;width:1px;height:20px;background:#c5d6ec"></div>
<div class="a" style="left:345px;top:97px;width:1px;height:20px;background:#c5d6ec"></div>
<svg class="a" style="left:280px;top:99px;" width="17" height="17" viewBox="0 0 17 17"><path d="M1.5 1.5 L9 1.5 L12.5 5 L12.5 15.5 L1.5 15.5 Z" fill="#fafafa" stroke="#6a6a6a"/>
<path d="M9 1.5 L9 5 L12.5 5" fill="#8ec6f4" stroke="#6a9cc8"/>
<g stroke="#a0a0a0"><line x1="3.5" y1="6.5" x2="8" y2="6.5"/><line x1="3.5" y1="8.5" x2="9" y2="8.5"/><line x1="3.5" y1="10.5" x2="7" y2="10.5"/><line x1="3.5" y1="12.5" x2="6" y2="12.5"/></g>
<path d="M14.5 7 L16 8.5 L9.5 15 L7.5 15.5 L8 13.5 Z" fill="#f8c840" stroke="#6a4a20" stroke-width="0.9"/><path d="M14.5 7 L16 8.5 L15 9.5 L13.5 8 Z" fill="#e07070"/></svg>
<svg class="a" style="left:303px;top:99px;" width="17" height="16" viewBox="0 0 17 16"><path d="M1 9 L4 6.5 L7 10 L13.5 3 L16 5.5 L7 15 Z" fill="#3a8ae6" stroke="#1a4fb0" stroke-width="1" stroke-linejoin="round"/>
<path d="M8 7 L4.5 3.5 L3 5 L3 0.5 L7.5 0.5 L6 2 L9.5 5.5 Z" fill="#ff7a6a" stroke="#c0302a" stroke-width="0.9" stroke-linejoin="round"/></svg>
<svg class="a" style="left:326px;top:99px;" width="16" height="16" viewBox="0 0 16 16"><defs><radialGradient id="ns" cx="0.4" cy="0.35" r="0.75"><stop offset="0" stop-color="#ff9a8a"/><stop offset="1" stop-color="#d8281c"/></radialGradient></defs>
<circle cx="8" cy="8" r="6.6" fill="none" stroke="url(#ns)" stroke-width="2.6"/><circle cx="8" cy="8" r="7.8" fill="none" stroke="#b02010" stroke-width="0.6"/>
<line x1="4" y1="12" x2="12" y2="4" stroke="#e03a2a" stroke-width="2.6"/></svg>
<svg class="a" style="left:349px;top:99px;" width="16" height="16" viewBox="0 0 16 16"><defs><linearGradient id="sf" x1="0" y1="0" x2="0" y2="1"><stop offset="0" stop-color="#8a8ea8"/><stop offset="1" stop-color="#4a4e68"/></linearGradient></defs>
<rect x="0.5" y="0.5" width="15" height="14" rx="1.5" fill="url(#sf)" stroke="#303448"/>
<rect x="2.5" y="2.5" width="11" height="10" fill="#9da2b8" stroke="#3a3e55" stroke-width="0.8"/>
<circle cx="6" cy="7.5" r="2.2" fill="#e0e0e0" stroke="#505050" stroke-width="0.8"/><rect x="8" y="6.8" width="4" height="1.5" fill="#d8d8d8"/>
<rect x="1.5" y="14.5" width="3" height="1.5" fill="#303448"/><rect x="11.5" y="14.5" width="3" height="1.5" fill="#303448"/></svg>
<svg class="a" style="left:376px;top:58px;" width="40" height="40" viewBox="0 0 40 40"><defs><radialGradient id="mg376" cx="0.4" cy="0.35" r="0.7"><stop offset="0" stop-color="#ffffff"/><stop offset="0.35" stop-color="#c6e4fb"/><stop offset="1" stop-color="#74b2ea"/></radialGradient>
<linearGradient id="mh376" x1="0" y1="0" x2="1" y2="0"><stop offset="0" stop-color="#d8908a"/><stop offset="1" stop-color="#6a2020"/></linearGradient></defs>
<line x1="25.5" y1="22.5" x2="34" y2="31" stroke="#5a1c1c" stroke-width="5.8" stroke-linecap="round"/>
<line x1="25.5" y1="22.5" x2="34" y2="31" stroke="#9a4a48" stroke-width="3.8" stroke-linecap="round"/>
<line x1="25" y1="22" x2="33" y2="30" stroke="#d49a96" stroke-width="1.2" stroke-linecap="round" transform="translate(-0.9,0.9)"/>
<line x1="23.5" y1="20.5" x2="26" y2="23" stroke="#7a8a9a" stroke-width="3.2"/>
<circle cx="17" cy="15" r="9.6" fill="url(#mg376)" stroke="#1d4f8a" stroke-width="1.5"/>
<path d="M11 14 Q12 9 17 8.5" stroke="#fff" stroke-width="1.3" fill="none" opacity="0.8"/>
<circle cx="12.5" cy="19" r="1.3" fill="#fff" opacity="0.8"/></svg>
<svg class="a" style="left:637px;top:58px;" width="40" height="40" viewBox="0 0 40 40"><defs><radialGradient id="mg637" cx="0.4" cy="0.35" r="0.7"><stop offset="0" stop-color="#ffffff"/><stop offset="0.35" stop-color="#c6e4fb"/><stop offset="1" stop-color="#74b2ea"/></radialGradient>
<linearGradient id="mh637" x1="0" y1="0" x2="1" y2="0"><stop offset="0" stop-color="#d8908a"/><stop offset="1" stop-color="#6a2020"/></linearGradient></defs>
<line x1="25.5" y1="22.5" x2="34" y2="31" stroke="#5a1c1c" stroke-width="5.8" stroke-linecap="round"/>
<line x1="25.5" y1="22.5" x2="34" y2="31" stroke="#9a4a48" stroke-width="3.8" stroke-linecap="round"/>
<line x1="25" y1="22" x2="33" y2="30" stroke="#d49a96" stroke-width="1.2" stroke-linecap="round" transform="translate(-0.9,0.9)"/>
<line x1="23.5" y1="20.5" x2="26" y2="23" stroke="#7a8a9a" stroke-width="3.2"/>
<circle cx="17" cy="15" r="9.6" fill="url(#mg637)" stroke="#1d4f8a" stroke-width="1.5"/>
<path d="M11 14 Q12 9 17 8.5" stroke="#fff" stroke-width="1.3" fill="none" opacity="0.8"/>
<circle cx="12.5" cy="19" r="1.3" fill="#fff" opacity="0.8"/></svg>
<svg class="a" style="left:889px;top:58px;" width="40" height="40" viewBox="0 0 40 40"><defs><radialGradient id="mg889" cx="0.4" cy="0.35" r="0.7"><stop offset="0" stop-color="#ffffff"/><stop offset="0.35" stop-color="#c6e4fb"/><stop offset="1" stop-color="#74b2ea"/></radialGradient>
<linearGradient id="mh889" x1="0" y1="0" x2="1" y2="0"><stop offset="0" stop-color="#d8908a"/><stop offset="1" stop-color="#6a2020"/></linearGradient></defs>
<line x1="25.5" y1="22.5" x2="34" y2="31" stroke="#5a1c1c" stroke-width="5.8" stroke-linecap="round"/>
<line x1="25.5" y1="22.5" x2="34" y2="31" stroke="#9a4a48" stroke-width="3.8" stroke-linecap="round"/>
<line x1="25" y1="22" x2="33" y2="30" stroke="#d49a96" stroke-width="1.2" stroke-linecap="round" transform="translate(-0.9,0.9)"/>
<line x1="23.5" y1="20.5" x2="26" y2="23" stroke="#7a8a9a" stroke-width="3.2"/>
<circle cx="17" cy="15" r="9.6" fill="url(#mg889)" stroke="#1d4f8a" stroke-width="1.5"/>
<path d="M11 14 Q12 9 17 8.5" stroke="#fff" stroke-width="1.3" fill="none" opacity="0.8"/>
<circle cx="12.5" cy="19" r="1.3" fill="#fff" opacity="0.8"/></svg>
<svg class="a" style="left:394px;top:116px;" width="7" height="4" viewBox="0 0 7 4"><path d="M0.5 0.5 L6.5 0.5 L3.5 3.5 Z" fill="#5074a8"/></svg>
<svg class="a" style="left:655px;top:116px;" width="7" height="4" viewBox="0 0 7 4"><path d="M0.5 0.5 L6.5 0.5 L3.5 3.5 Z" fill="#5074a8"/></svg>
<svg class="a" style="left:907px;top:116px;" width="7" height="4" viewBox="0 0 7 4"><path d="M0.5 0.5 L6.5 0.5 L3.5 3.5 Z" fill="#5074a8"/></svg>
<svg class="a" style="left:409px;top:130px;" width="9" height="9" viewBox="0 0 9 9"><rect x="0" y="0" width="6" height="1" fill="#6288b8"/><rect x="0" y="0" width="1" height="7" fill="#6288b8"/><rect x="1" y="1" width="5" height="1" fill="#fff" opacity="0.9"/><rect x="1" y="1" width="1" height="6" fill="#fff" opacity="0.9"/><rect x="3" y="3" width="4" height="4" fill="#5a82b4"/><rect x="4" y="3" width="1" height="1" fill="#eef4fb"/><rect x="3" y="4" width="1" height="1" fill="#9ab4d4"/><rect x="7" y="4" width="1" height="4" fill="#fff"/><rect x="3" y="7" width="5" height="1" fill="#fff"/></svg>
<svg class="a" style="left:670px;top:130px;" width="9" height="9" viewBox="0 0 9 9"><rect x="0" y="0" width="6" height="1" fill="#6288b8"/><rect x="0" y="0" width="1" height="7" fill="#6288b8"/><rect x="1" y="1" width="5" height="1" fill="#fff" opacity="0.9"/><rect x="1" y="1" width="1" height="6" fill="#fff" opacity="0.9"/><rect x="3" y="3" width="4" height="4" fill="#5a82b4"/><rect x="4" y="3" width="1" height="1" fill="#eef4fb"/><rect x="3" y="4" width="1" height="1" fill="#9ab4d4"/><rect x="7" y="4" width="1" height="4" fill="#fff"/><rect x="3" y="7" width="5" height="1" fill="#fff"/></svg>
<svg class="a" style="left:922px;top:130px;" width="9" height="9" viewBox="0 0 9 9"><rect x="0" y="0" width="6" height="1" fill="#6288b8"/><rect x="0" y="0" width="1" height="7" fill="#6288b8"/><rect x="1" y="1" width="5" height="1" fill="#fff" opacity="0.9"/><rect x="1" y="1" width="1" height="6" fill="#fff" opacity="0.9"/><rect x="3" y="3" width="4" height="4" fill="#5a82b4"/><rect x="4" y="3" width="1" height="1" fill="#eef4fb"/><rect x="3" y="4" width="1" height="1" fill="#9ab4d4"/><rect x="7" y="4" width="1" height="4" fill="#fff"/><rect x="3" y="7" width="5" height="1" fill="#fff"/></svg>
<svg class="a" style="left:21px;top:152px;" width="17" height="17" viewBox="0 0 17 17"><rect x="11" y="1.5" width="1.6" height="4" fill="#c02020"/>
<path d="M3 8 L3 15.5 L14 15.5 L14 8 L8.5 3 Z" fill="#eceae6" stroke="#6a6a6a" stroke-width="0.9"/>
<path d="M0.8 9 L8.5 1.5 L16.2 9" stroke="#6a4020" stroke-width="2.6" fill="none" stroke-linejoin="round"/>
<path d="M0.8 9 L8.5 1.5 L16.2 9" stroke="#e8b070" stroke-width="1.3" fill="none" stroke-linejoin="round"/>
<rect x="4.5" y="10" width="3.5" height="5.5" fill="#c8782a" stroke="#6a4020" stroke-width="0.7"/>
<rect x="9.5" y="10" width="3" height="2.8" fill="#88c4f0" stroke="#5a5a5a" stroke-width="0.7"/></svg>
<svg class="a" style="left:25px;top:180px;" width="16" height="16" viewBox="0 0 16 16"><rect x="0.5" y="0.5" width="12" height="15" fill="#fdfdfd" stroke="#6e6e6e"/><rect x="1" y="1" width="11" height="3" fill="#9a9a9a"/><rect x="2" y="2" width="4" height="1" fill="#fff"/><rect x="7" y="2" width="2" height="1" fill="#fff"/><rect x="10" y="2" width="1.5" height="1" fill="#fff"/><rect x="1" y="5" width="11" height="1.6" fill="#9ede6a"/><rect x="2" y="5" width="1.2" height="1.6" fill="#3a9a20"/><rect x="1" y="8" width="11" height="1.6" fill="#9ede6a"/><rect x="2" y="8" width="1.2" height="1.6" fill="#3a9a20"/><rect x="1" y="11" width="11" height="1.6" fill="#9ede6a"/><rect x="2" y="11" width="1.2" height="1.6" fill="#3a9a20"/><rect x="1" y="14" width="11" height="1.6" fill="#9ede6a"/><rect x="2" y="14" width="1.2" height="1.6" fill="#3a9a20"/><line x1="4.5" y1="4" x2="4.5" y2="15.5" stroke="#b0b0b0" stroke-width="0.8"/><line x1="8.5" y1="4" x2="8.5" y2="15.5" stroke="#b0b0b0" stroke-width="0.8"/><path d="M6.5 6.5 L13 6.5 L11 8.5 L15.5 13 L12.5 16 L8 11.5 L6.5 13 Z" fill="#62de3a" stroke="#0a7010" stroke-width="1.1" stroke-linejoin="round"/></svg>
<svg class="a" style="left:111px;top:180px;" width="16" height="16" viewBox="0 0 16 16"><rect x="0.5" y="0.5" width="12" height="15" fill="#fdfdfd" stroke="#6e6e6e"/><rect x="1" y="1" width="11" height="3" fill="#9a9a9a"/><rect x="2" y="2" width="4" height="1" fill="#fff"/><rect x="7" y="2" width="2" height="1" fill="#fff"/><rect x="10" y="2" width="1.5" height="1" fill="#fff"/><rect x="1" y="5" width="11" height="1.6" fill="#8ab8f0"/><rect x="2" y="5" width="1.2" height="1.6" fill="#2a5aa8"/><rect x="1" y="8" width="11" height="1.6" fill="#8ab8f0"/><rect x="2" y="8" width="1.2" height="1.6" fill="#2a5aa8"/><rect x="1" y="11" width="11" height="1.6" fill="#8ab8f0"/><rect x="2" y="11" width="1.2" height="1.6" fill="#2a5aa8"/><rect x="1" y="14" width="11" height="1.6" fill="#8ab8f0"/><rect x="2" y="14" width="1.2" height="1.6" fill="#2a5aa8"/><line x1="4.5" y1="4" x2="4.5" y2="15.5" stroke="#b0b0b0" stroke-width="0.8"/><line x1="8.5" y1="4" x2="8.5" y2="15.5" stroke="#b0b0b0" stroke-width="0.8"/><rect x="5.5" y="5.2" width="2" height="1.2" fill="#1a3a80"/><rect x="5.5" y="8.2" width="2" height="1.2" fill="#1a3a80"/><rect x="5.5" y="11.2" width="2" height="1.2" fill="#1a3a80"/></svg>
<svg class="a" style="left:237px;top:179px;" width="16" height="16" viewBox="0 0 16 16"><rect x="0.5" y="0.5" width="12" height="15" fill="#fdfdfd" stroke="#6e6e6e"/><rect x="1" y="1" width="11" height="3" fill="#9a9a9a"/><rect x="2" y="2" width="4" height="1" fill="#fff"/><rect x="7" y="2" width="2" height="1" fill="#fff"/><rect x="10" y="2" width="1.5" height="1" fill="#fff"/><rect x="1" y="5" width="11" height="1.6" fill="#ffa8a8"/><rect x="2" y="5" width="1.2" height="1.6" fill="#e07070"/><rect x="1" y="8" width="11" height="1.6" fill="#ffa8a8"/><rect x="2" y="8" width="1.2" height="1.6" fill="#e07070"/><rect x="1" y="11" width="11" height="1.6" fill="#ffa8a8"/><rect x="2" y="11" width="1.2" height="1.6" fill="#e07070"/><rect x="1" y="14" width="11" height="1.6" fill="#ffa8a8"/><rect x="2" y="14" width="1.2" height="1.6" fill="#e07070"/><line x1="4.5" y1="4" x2="4.5" y2="15.5" stroke="#b0b0b0" stroke-width="0.8"/><line x1="8.5" y1="4" x2="8.5" y2="15.5" stroke="#b0b0b0" stroke-width="0.8"/><path d="M15.5 15.5 L9 15.5 L11 13.5 L6.5 9 L9.5 6 L14 10.5 L15.5 9 Z" fill="#ff6a44" stroke="#b82010" stroke-width="1.1" stroke-linejoin="round"/></svg>
<svg class="a" style="left:39px;top:227px;" width="16" height="13" viewBox="0 0 16 13"><rect x="0.5" y="0.5" width="15" height="12" rx="1.5" fill="#f4f4f4" stroke="#7a7a7a"/>
<rect x="1" y="1" width="14" height="1.6" fill="#ffffff"/>
<rect x="1" y="2.6" width="14" height="1.8" fill="#ff9e9e"/><rect x="1" y="4.4" width="14" height="0.6" fill="#d0d0d0"/>
<rect x="1" y="5" width="14" height="1.8" fill="#9dc0ff"/><rect x="1" y="6.8" width="14" height="0.6" fill="#d0d0d0"/>
<rect x="1" y="7.4" width="14" height="1.8" fill="#9dc0ff"/><rect x="1" y="9.2" width="14" height="0.4" fill="#d0d0d0"/>
<rect x="1" y="9.6" width="14" height="1.2" fill="#7eacf8"/>
<g fill="#4a4a4a"><rect x="3" y="3.1" width="4" height="0.9"/><rect x="8" y="3.1" width="4" height="0.9"/><rect x="3" y="5.5" width="2" height="0.9"/><rect x="6" y="5.5" width="4" height="0.9"/><rect x="3" y="7.9" width="5" height="0.9"/><rect x="9" y="7.9" width="2" height="0.9"/></g>
<rect x="1" y="10.8" width="14" height="1.4" fill="#b8b8b8"/><rect x="3.6" y="10.6" width="1.4" height="2.4" fill="#fff"/><rect x="10.8" y="10.6" width="1.4" height="2.4" fill="#fff"/></svg>
<svg class="a" style="left:39px;top:248px;" width="16" height="13" viewBox="0 0 16 13"><rect x="0.5" y="0.5" width="15" height="12" rx="1.5" fill="#f4f4f4" stroke="#7a7a7a"/>
<rect x="1" y="1" width="14" height="1.6" fill="#ffffff"/>
<rect x="1" y="2.6" width="14" height="1.8" fill="#ff9e9e"/><rect x="1" y="4.4" width="14" height="0.6" fill="#d0d0d0"/>
<rect x="1" y="5" width="14" height="1.8" fill="#9dc0ff"/><rect x="1" y="6.8" width="14" height="0.6" fill="#d0d0d0"/>
<rect x="1" y="7.4" width="14" height="1.8" fill="#9dc0ff"/><rect x="1" y="9.2" width="14" height="0.4" fill="#d0d0d0"/>
<rect x="1" y="9.6" width="14" height="1.2" fill="#7eacf8"/>
<g fill="#4a4a4a"><rect x="3" y="3.1" width="4" height="0.9"/><rect x="8" y="3.1" width="4" height="0.9"/><rect x="3" y="5.5" width="2" height="0.9"/><rect x="6" y="5.5" width="4" height="0.9"/><rect x="3" y="7.9" width="5" height="0.9"/><rect x="9" y="7.9" width="2" height="0.9"/></g>
<rect x="1" y="10.8" width="14" height="1.4" fill="#b8b8b8"/><rect x="3.6" y="10.6" width="1.4" height="2.4" fill="#fff"/><rect x="10.8" y="10.6" width="1.4" height="2.4" fill="#fff"/></svg>
<svg class="a" style="left:39px;top:269px;" width="16" height="13" viewBox="0 0 16 13"><rect x="0.5" y="0.5" width="15" height="12" rx="1.5" fill="#f4f4f4" stroke="#7a7a7a"/>
<rect x="1" y="1" width="14" height="1.6" fill="#ffffff"/>
<rect x="1" y="2.6" width="14" height="1.8" fill="#ff9e9e"/><rect x="1" y="4.4" width="14" height="0.6" fill="#d0d0d0"/>
<rect x="1" y="5" width="14" height="1.8" fill="#9dc0ff"/><rect x="1" y="6.8" width="14" height="0.6" fill="#d0d0d0"/>
<rect x="1" y="7.4" width="14" height="1.8" fill="#9dc0ff"/><rect x="1" y="9.2" width="14" height="0.4" fill="#d0d0d0"/>
<rect x="1" y="9.6" width="14" height="1.2" fill="#7eacf8"/>
<g fill="#4a4a4a"><rect x="3" y="3.1" width="4" height="0.9"/><rect x="8" y="3.1" width="4" height="0.9"/><rect x="3" y="5.5" width="2" height="0.9"/><rect x="6" y="5.5" width="4" height="0.9"/><rect x="3" y="7.9" width="5" height="0.9"/><rect x="9" y="7.9" width="2" height="0.9"/></g>
<rect x="1" y="10.8" width="14" height="1.4" fill="#b8b8b8"/><rect x="3.6" y="10.6" width="1.4" height="2.4" fill="#fff"/><rect x="10.8" y="10.6" width="1.4" height="2.4" fill="#fff"/></svg>
<svg class="a" style="left:39px;top:290px;" width="16" height="13" viewBox="0 0 16 13"><rect x="0.5" y="0.5" width="15" height="12" rx="1.5" fill="#f4f4f4" stroke="#7a7a7a"/>
<rect x="1" y="1" width="14" height="1.6" fill="#ffffff"/>
<rect x="1" y="2.6" width="14" height="1.8" fill="#ff9e9e"/><rect x="1" y="4.4" width="14" height="0.6" fill="#d0d0d0"/>
<rect x="1" y="5" width="14" height="1.8" fill="#9dc0ff"/><rect x="1" y="6.8" width="14" height="0.6" fill="#d0d0d0"/>
<rect x="1" y="7.4" width="14" height="1.8" fill="#9dc0ff"/><rect x="1" y="9.2" width="14" height="0.4" fill="#d0d0d0"/>
<rect x="1" y="9.6" width="14" height="1.2" fill="#7eacf8"/>
<g fill="#4a4a4a"><rect x="3" y="3.1" width="4" height="0.9"/><rect x="8" y="3.1" width="4" height="0.9"/><rect x="3" y="5.5" width="2" height="0.9"/><rect x="6" y="5.5" width="4" height="0.9"/><rect x="3" y="7.9" width="5" height="0.9"/><rect x="9" y="7.9" width="2" height="0.9"/></g>
<rect x="1" y="10.8" width="14" height="1.4" fill="#b8b8b8"/><rect x="3.6" y="10.6" width="1.4" height="2.4" fill="#fff"/><rect x="10.8" y="10.6" width="1.4" height="2.4" fill="#fff"/></svg>
<svg class="a" style="left:39px;top:311px;" width="16" height="13" viewBox="0 0 16 13"><rect x="0.5" y="0.5" width="15" height="12" rx="1.5" fill="#f4f4f4" stroke="#7a7a7a"/>
<rect x="1" y="1" width="14" height="1.6" fill="#ffffff"/>
<rect x="1" y="2.6" width="14" height="1.8" fill="#ff9e9e"/><rect x="1" y="4.4" width="14" height="0.6" fill="#d0d0d0"/>
<rect x="1" y="5" width="14" height="1.8" fill="#9dc0ff"/><rect x="1" y="6.8" width="14" height="0.6" fill="#d0d0d0"/>
<rect x="1" y="7.4" width="14" height="1.8" fill="#9dc0ff"/><rect x="1" y="9.2" width="14" height="0.4" fill="#d0d0d0"/>
<rect x="1" y="9.6" width="14" height="1.2" fill="#7eacf8"/>
<g fill="#4a4a4a"><rect x="3" y="3.1" width="4" height="0.9"/><rect x="8" y="3.1" width="4" height="0.9"/><rect x="3" y="5.5" width="2" height="0.9"/><rect x="6" y="5.5" width="4" height="0.9"/><rect x="3" y="7.9" width="5" height="0.9"/><rect x="9" y="7.9" width="2" height="0.9"/></g>
<rect x="1" y="10.8" width="14" height="1.4" fill="#b8b8b8"/><rect x="3.6" y="10.6" width="1.4" height="2.4" fill="#fff"/><rect x="10.8" y="10.6" width="1.4" height="2.4" fill="#fff"/></svg>
<svg class="a" style="left:39px;top:332px;" width="16" height="13" viewBox="0 0 16 13"><rect x="0.5" y="0.5" width="15" height="12" rx="1.5" fill="#f4f4f4" stroke="#7a7a7a"/>
<rect x="1" y="1" width="14" height="1.6" fill="#ffffff"/>
<rect x="1" y="2.6" width="14" height="1.8" fill="#ff9e9e"/><rect x="1" y="4.4" width="14" height="0.6" fill="#d0d0d0"/>
<rect x="1" y="5" width="14" height="1.8" fill="#9dc0ff"/><rect x="1" y="6.8" width="14" height="0.6" fill="#d0d0d0"/>
<rect x="1" y="7.4" width="14" height="1.8" fill="#9dc0ff"/><rect x="1" y="9.2" width="14" height="0.4" fill="#d0d0d0"/>
<rect x="1" y="9.6" width="14" height="1.2" fill="#7eacf8"/>
<g fill="#4a4a4a"><rect x="3" y="3.1" width="4" height="0.9"/><rect x="8" y="3.1" width="4" height="0.9"/><rect x="3" y="5.5" width="2" height="0.9"/><rect x="6" y="5.5" width="4" height="0.9"/><rect x="3" y="7.9" width="5" height="0.9"/><rect x="9" y="7.9" width="2" height="0.9"/></g>
<rect x="1" y="10.8" width="14" height="1.4" fill="#b8b8b8"/><rect x="3.6" y="10.6" width="1.4" height="2.4" fill="#fff"/><rect x="10.8" y="10.6" width="1.4" height="2.4" fill="#fff"/></svg>
<svg class="a" style="left:39px;top:353px;" width="16" height="13" viewBox="0 0 16 13"><rect x="0.5" y="0.5" width="15" height="12" rx="1.5" fill="#f4f4f4" stroke="#7a7a7a"/>
<rect x="1" y="1" width="14" height="1.6" fill="#ffffff"/>
<rect x="1" y="2.6" width="14" height="1.8" fill="#ff9e9e"/><rect x="1" y="4.4" width="14" height="0.6" fill="#d0d0d0"/>
<rect x="1" y="5" width="14" height="1.8" fill="#9dc0ff"/><rect x="1" y="6.8" width="14" height="0.6" fill="#d0d0d0"/>
<rect x="1" y="7.4" width="14" height="1.8" fill="#9dc0ff"/><rect x="1" y="9.2" width="14" height="0.4" fill="#d0d0d0"/>
<rect x="1" y="9.6" width="14" height="1.2" fill="#7eacf8"/>
<g fill="#4a4a4a"><rect x="3" y="3.1" width="4" height="0.9"/><rect x="8" y="3.1" width="4" height="0.9"/><rect x="3" y="5.5" width="2" height="0.9"/><rect x="6" y="5.5" width="4" height="0.9"/><rect x="3" y="7.9" width="5" height="0.9"/><rect x="9" y="7.9" width="2" height="0.9"/></g>
<rect x="1" y="10.8" width="14" height="1.4" fill="#b8b8b8"/><rect x="3.6" y="10.6" width="1.4" height="2.4" fill="#fff"/><rect x="10.8" y="10.6" width="1.4" height="2.4" fill="#fff"/></svg>
<svg class="a" style="left:616px;top:446px;" width="16" height="16" viewBox="0 0 16 16"><defs><radialGradient id="st1" cx="0.45" cy="0.35" r="0.7"><stop offset="0" stop-color="#ff8a80"/><stop offset="0.55" stop-color="#e82020"/><stop offset="1" stop-color="#b00808"/></radialGradient></defs>
<path d="M5 0.5 L11 0.5 L15.5 5 L15.5 11 L11 15.5 L5 15.5 L0.5 11 L0.5 5 Z" fill="url(#st1)" stroke="#8a0808"/>
<path d="M5.4 1.6 L10.6 1.6 L14.4 5.4 L14.4 10.6 L10.6 14.4 L5.4 14.4 L1.6 10.6 L1.6 5.4 Z" fill="none" stroke="#ffb0a8" stroke-width="0.8" opacity="0.8"/></svg>
<svg class="a" style="left:616px;top:467px;" width="16" height="16" viewBox="0 0 16 16"><defs><radialGradient id="in2" cx="0.4" cy="0.3" r="0.75"><stop offset="0" stop-color="#c8e6ff"/><stop offset="0.6" stop-color="#4a98e8"/><stop offset="1" stop-color="#1a5ab8"/></radialGradient></defs>
<circle cx="8" cy="8" r="7.5" fill="url(#in2)" stroke="#1a4a98" stroke-width="0.8"/>
<rect x="7" y="3" width="2" height="2" fill="#fff"/><path d="M5.5 6.2 L9 6.2 L9 11.3 L10.5 11.3 L10.5 12.8 L5.5 12.8 L5.5 11.3 L7 11.3 L7 7.7 L5.5 7.7 Z" fill="#fff"/></svg>
<svg class="a" style="left:616px;top:488px;" width="16" height="16" viewBox="0 0 16 16"><defs><radialGradient id="in3" cx="0.4" cy="0.3" r="0.75"><stop offset="0" stop-color="#c8e6ff"/><stop offset="0.6" stop-color="#4a98e8"/><stop offset="1" stop-color="#1a5ab8"/></radialGradient></defs>
<circle cx="8" cy="8" r="7.5" fill="url(#in3)" stroke="#1a4a98" stroke-width="0.8"/>
<rect x="7" y="3" width="2" height="2" fill="#fff"/><path d="M5.5 6.2 L9 6.2 L9 11.3 L10.5 11.3 L10.5 12.8 L5.5 12.8 L5.5 11.3 L7 11.3 L7 7.7 L5.5 7.7 Z" fill="#fff"/></svg>
<svg class="a" style="left:616px;top:509px;" width="16" height="16" viewBox="0 0 16 16"><defs><radialGradient id="st4" cx="0.45" cy="0.35" r="0.7"><stop offset="0" stop-color="#ff8a80"/><stop offset="0.55" stop-color="#e82020"/><stop offset="1" stop-color="#b00808"/></radialGradient></defs>
<path d="M5 0.5 L11 0.5 L15.5 5 L15.5 11 L11 15.5 L5 15.5 L0.5 11 L0.5 5 Z" fill="url(#st4)" stroke="#8a0808"/>
<path d="M5.4 1.6 L10.6 1.6 L14.4 5.4 L14.4 10.6 L10.6 14.4 L5.4 14.4 L1.6 10.6 L1.6 5.4 Z" fill="none" stroke="#ffb0a8" stroke-width="0.8" opacity="0.8"/></svg>
<svg class="a" style="left:616px;top:530px;" width="16" height="16" viewBox="0 0 16 16"><circle cx="5.5" cy="4" r="3" fill="#8a5a30"/><path d="M0.5 13 Q0.5 8 5.5 8 Q10.5 8 10.5 13 Z" fill="#3a80d8" stroke="#1a4a98" stroke-width="0.7"/><path d="M4.5 8 L5.5 11 L6.5 8 Z" fill="#fff"/>
<circle cx="10.5" cy="7" r="3" fill="#e8b870" stroke="#a87840" stroke-width="0.5"/><path d="M5.5 15.5 Q5.5 10.5 10.5 10.5 Q15.5 10.5 15.5 15.5 Z" fill="#5ac83a" stroke="#2a8a1a" stroke-width="0.7"/><path d="M9.5 10.5 L10.5 13.5 L11.5 10.5 Z" fill="#fff"/></svg>
<svg class="a" style="left:603px;top:182px;" width="8" height="10" viewBox="0 0 8 10"><path d="M1 4.5 L4 1.5 L7 4.5" stroke="#4a6ea8" stroke-width="1.5" fill="none"/><path d="M1 8.5 L4 5.5 L7 8.5" stroke="#4a6ea8" stroke-width="1.5" fill="none"/><path d="M1 5.8 L4 2.8 L7 5.8 M1 9.8 L4 6.8 L7 9.8" stroke="#fff" stroke-width="0.8" fill="none" opacity="0.7"/></svg>
<svg class="a" style="left:603px;top:404px;" width="8" height="10" viewBox="0 0 8 10"><path d="M1 4.5 L4 1.5 L7 4.5" stroke="#4a6ea8" stroke-width="1.5" fill="none"/><path d="M1 8.5 L4 5.5 L7 8.5" stroke="#4a6ea8" stroke-width="1.5" fill="none"/><path d="M1 5.8 L4 2.8 L7 5.8 M1 9.8 L4 6.8 L7 9.8" stroke="#fff" stroke-width="0.8" fill="none" opacity="0.7"/></svg>
<svg class="a" style="left:994px;top:706px;" width="11" height="9" viewBox="0 0 11 9"><rect x="9" y="1" width="2" height="2" fill="#fff"/><rect x="8" y="0" width="2" height="2" fill="#7c97c0"/><rect x="6" y="4" width="2" height="2" fill="#fff"/><rect x="5" y="3" width="2" height="2" fill="#7c97c0"/><rect x="9" y="4" width="2" height="2" fill="#fff"/><rect x="8" y="3" width="2" height="2" fill="#7c97c0"/><rect x="3" y="7" width="2" height="2" fill="#fff"/><rect x="2" y="6" width="2" height="2" fill="#7c97c0"/><rect x="6" y="7" width="2" height="2" fill="#fff"/><rect x="5" y="6" width="2" height="2" fill="#7c97c0"/><rect x="9" y="7" width="2" height="2" fill="#fff"/><rect x="8" y="6" width="2" height="2" fill="#7c97c0"/></svg>
</body></html>
